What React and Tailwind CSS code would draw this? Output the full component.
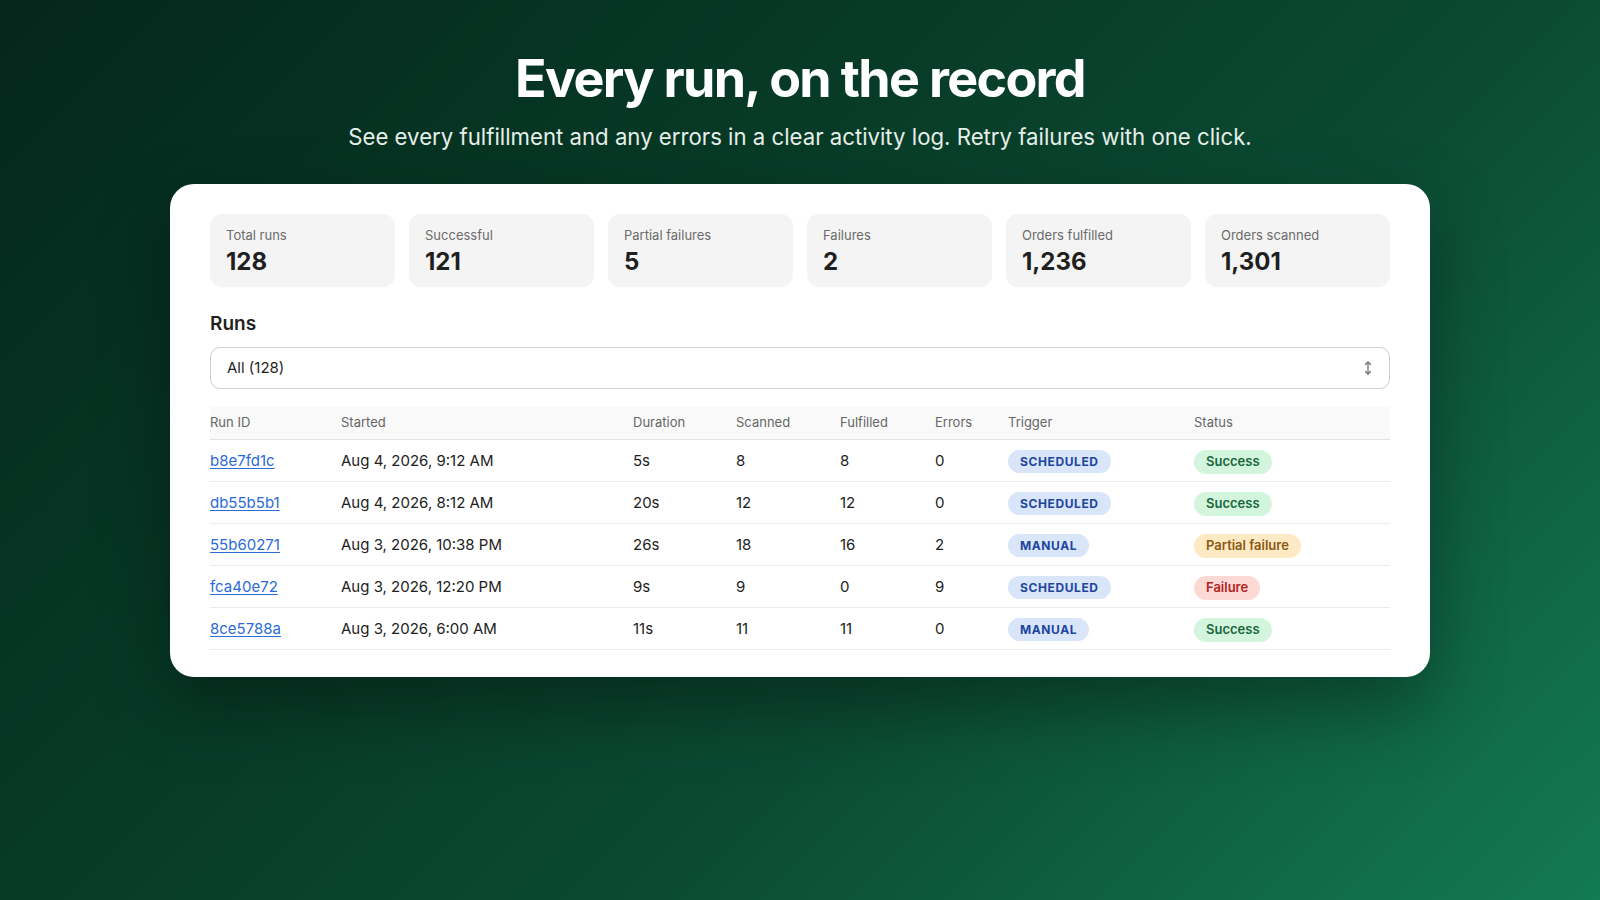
import React from 'react';

const stats = [
    { label: 'Total runs', value: '128' },
    { label: 'Successful', value: '121' },
    { label: 'Partial failures', value: '5' },
    { label: 'Failures', value: '2' },
    { label: 'Orders fulfilled', value: '1,236' },
    { label: 'Orders scanned', value: '1,301' },
];

const runs = [
    { id: 'b8e7fd1c', started: 'Aug 4, 2026, 9:12 AM', duration: '5s', scanned: 8, fulfilled: 8, errors: 0, trigger: 'SCHEDULED', status: 'success' },
    { id: 'db55b5b1', started: 'Aug 4, 2026, 8:12 AM', duration: '20s', scanned: 12, fulfilled: 12, errors: 0, trigger: 'SCHEDULED', status: 'success' },
    { id: '55b60271', started: 'Aug 3, 2026, 10:38 PM', duration: '26s', scanned: 18, fulfilled: 16, errors: 2, trigger: 'MANUAL', status: 'partial' },
    { id: 'fca40e72', started: 'Aug 3, 2026, 12:20 PM', duration: '9s', scanned: 9, fulfilled: 0, errors: 9, trigger: 'SCHEDULED', status: 'failure' },
    { id: '8ce5788a', started: 'Aug 3, 2026, 6:00 AM', duration: '11s', scanned: 11, fulfilled: 11, errors: 0, trigger: 'MANUAL', status: 'success' },
];

const statusStyles = {
    success: { label: 'Success', className: 'bg-[#d3f4dd] text-[#17683a]' },
    partial: { label: 'Partial failure', className: 'bg-[#fde9c3] text-[#8a5a13]' },
    failure: { label: 'Failure', className: 'bg-[#fdd9d6] text-[#b4231c]' },
};

const StatCard = ({ label, value }) => (
    <div className="bg-[#f4f4f4] rounded-xl px-4 pt-[12px] pb-[10px]">
        <p className="text-[13px] leading-[18px] text-[#6b6b6b]">{label}</p>
        <p className="mt-[3px] text-[24px] leading-[30px] font-bold text-[#1f1f1f]">{value}</p>
    </div>
);

const SortIcon = () => (
    <svg width="10" height="16" viewBox="0 0 10 16" fill="none" stroke="#6b6b6b" strokeWidth="1.2" strokeLinecap="round" strokeLinejoin="round">
        <path d="M5 2v12" />
        <path d="M2.5 4.5L5 2l2.5 2.5" />
        <path d="M2.5 11.5L5 14l2.5-2.5" />
    </svg>
);

export default function App() {
    return (
        <div className="min-h-[900px] w-full bg-[linear-gradient(135deg,#04271b_0%,#073a27_36%,#0b4a33_62%,#137a53_100%)] font-['Inter','Noto_Sans',sans-serif] flex flex-col items-center pt-[50px]">
            {/* Header */}
            <h1 className="text-[52px] leading-[57px] font-bold tracking-[-0.032em] text-white">
                Every run, on the record
            </h1>
            <p className="mt-[14px] text-[22.2px] leading-[31px] text-[#e6efe9]">
                See every fulfillment and any errors in a clear activity log. Retry failures with one click.
            </p>

            {/* Card */}
            <div className="mt-[32px] w-[1260px] bg-white rounded-3xl px-10 pt-[30px] pb-[27px] shadow-[0_30px_70px_rgba(0,0,0,0.35)]">
                <div className="grid grid-cols-6 gap-[14px]">
                    {stats.map((s) => (
                        <StatCard key={s.label} label={s.label} value={s.value} />
                    ))}
                </div>

                <h2 className="mt-[24px] text-[19px] leading-[26px] font-semibold text-[#1f1f1f]">Runs</h2>

                <div className="mt-[10px] h-[42px] border border-[#cfcfcf] rounded-[10px] px-4 flex items-center justify-between">
                    <span className="text-[15px] text-[#1f1f1f]">All (128)</span>
                    <SortIcon />
                </div>

                <table className="mt-[18px] w-full table-fixed border-collapse">
                    <thead>
                        <tr className="bg-[#f9f9f9] border-b border-[#e3e3e3]">
                            <th className="w-[131px] h-[32px] text-left text-[13px] font-normal text-[#666]">Run ID</th>
                            <th className="w-[292px] text-left text-[13px] font-normal text-[#666]">Started</th>
                            <th className="w-[103px] text-left text-[13px] font-normal text-[#666]">Duration</th>
                            <th className="w-[104px] text-left text-[13px] font-normal text-[#666]">Scanned</th>
                            <th className="w-[95px] text-left text-[13px] font-normal text-[#666]">Fulfilled</th>
                            <th className="w-[73px] text-left text-[13px] font-normal text-[#666]">Errors</th>
                            <th className="w-[186px] text-left text-[13px] font-normal text-[#666]">Trigger</th>
                            <th className="text-left text-[13px] font-normal text-[#666]">Status</th>
                        </tr>
                    </thead>
                    <tbody>
                        {runs.map((r) => {
                            const st = statusStyles[r.status];
                            return (
                                <tr key={r.id} className="border-b border-[#ececec] text-[15px] text-[#222]">
                                    <td className="h-[42px] pt-[3px]">
                                        <a href="#" className="text-[#2a6bd6] underline underline-offset-2">{r.id}</a>
                                    </td>
                                    <td className="pt-[3px]">{r.started}</td>
                                    <td className="pt-[3px]">{r.duration}</td>
                                    <td className="pt-[3px]">{r.scanned}</td>
                                    <td className="pt-[3px]">{r.fulfilled}</td>
                                    <td className="pt-[3px]">{r.errors}</td>
                                    <td className="pt-[3px]">
                                        <span className="inline-flex items-center h-[23px] px-3 rounded-full bg-[#d9e6fa] text-[#1f45a0] text-[12px] font-bold tracking-wider">
                                            {r.trigger}
                                        </span>
                                    </td>
                                    <td className="pt-[3px]">
                                        <span className={`inline-flex items-center h-[24px] px-3 rounded-full text-[13px] font-semibold ${st.className}`}>
                                            {st.label}
                                        </span>
                                    </td>
                                </tr>
                            );
                        })}
                    </tbody>
                </table>
            </div>
        </div>
    );
}
